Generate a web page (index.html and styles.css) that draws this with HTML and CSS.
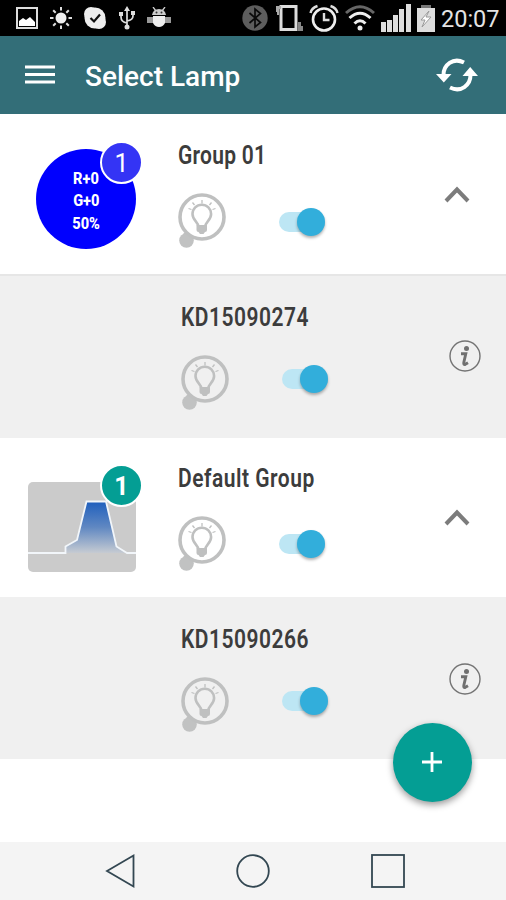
FILE: index.html
```html
<!DOCTYPE html>
<html lang="en">
<head>
    <meta charset="UTF-8">
    <meta name="viewport" content="width=device-width, initial-scale=1.0">
    <title>Select Lamp</title>
    <link rel="stylesheet" href="styles.css">
</head>
<body>
    <!-- shared icons -->
    <svg class="defs" width="0" height="0">
        <symbol id="finder" viewBox="0 0 50 58">
            <path d="M11 43l-3 6" stroke="#c1c2c2" stroke-width="11"/>
            <circle cx="8.500" cy="48.500" r="7.300" fill="#c1c2c2"/>
            <circle cx="24" cy="25" r="22" fill="none" stroke="#bfc0c0" stroke-width="3.600"/>
            <path d="M20.200 34c0-5-6-6.500-6-13a9.300 9.300 0 0 1 18.600 0c0 6.500-6 8-6 13" transform="translate(.3 1)" fill="none" stroke="#bfc0c0" stroke-width="2.600"/>
            <path d="M18.500 33h10.500v5q0 2-2 2l-1.500 2h-3.500l-1.500-2q-2 0-2-2z" fill="#bfc0c0"/>
            <path d="M24 8v3.500M14.500 10.500l2 2.500M33.500 10.500l-2 2.500M10.500 16.500l3 1M37.500 16.500l-3 1" stroke="#bfc0c0" stroke-width="1.300"/>
        </symbol>
        <symbol id="chevron" viewBox="0 0 26 18">
            <path d="M2 16L13 4.500 24 16" fill="none" stroke="#7c7c7c" stroke-width="4"/>
        </symbol>
        <symbol id="info" viewBox="0 0 32 32">
            <circle cx="16" cy="16" r="15" fill="none" stroke="#737373" stroke-width="1.400"/>
            <circle cx="17.500" cy="8.500" r="2.500" fill="#707070"/>
            <path d="M12 13.800h4.800L14.800 22.500q-.4 2.500 1.600 1.800l2.600-1.500" fill="none" stroke="#707070" stroke-width="2.900"/>
        </symbol>
    </svg>

    <div class="status-bar">
        <div class="status-left">
            <svg width="22" height="22" viewBox="0 0 22 22">
                <rect x="1" y="1" width="20" height="20" fill="none" stroke="#ddd" stroke-width="2"/>
                <path d="M3 19v-5l4-3 3 2 4-3 5 5v4z" fill="#fff"/>
            </svg>
            <svg width="22" height="22" viewBox="0 0 22 22">
                <circle cx="11" cy="11" r="5.500" fill="#eee"/>
                <path d="M11 0v3.500M11 18.500V22M0 11h3.500M18.500 11H22M3.200 3.200l2.500 2.500M16.300 16.300l2.500 2.500M3.200 18.800l2.500-2.500M16.300 5.700l2.500-2.500" stroke="#ddd" stroke-width="2"/>
            </svg>
            <svg width="24" height="24" viewBox="0 0 24 24">
                <circle cx="8" cy="8" r="7" fill="#eee"/>
                <circle cx="16" cy="16" r="7" fill="#eee"/>
                <circle cx="12" cy="12" r="10.500" fill="#eee"/>
                <path d="M7.500 12l3.500 3.500 6-7" fill="none" stroke="#111" stroke-width="2.200"/>
            </svg>
            <svg width="16" height="24" viewBox="0 0 16 24">
                <path d="M8 3v18M8 17q-6-1-6-6V8M8 15q6-1 6-5V7" fill="none" stroke="#ddd" stroke-width="1.700"/>
                <path d="M8 0l3 5H5zM0 6h4v4H0zM12 5h4v4h-4z" fill="#ddd"/>
                <circle cx="8" cy="21" r="2.500" fill="#ddd"/>
            </svg>
            <svg width="24" height="22" viewBox="0 0 24 22">
                <path d="M5 8Q6 2 12 2t7 6z" fill="#ccc"/>
                <path d="M6 0l3 4M18 0l-3 4" stroke="#ccc" stroke-width="1.300"/>
                <path d="M0 10h6v6H0zM18 10h6v6h-6z" fill="#999"/>
                <path d="M6 9h12v7q-2 4-6 4t-6-4z" fill="#eee"/>
                <circle cx="9.500" cy="5.500" r="1" fill="#333"/>
                <circle cx="14.500" cy="5.500" r="1" fill="#333"/>
            </svg>
        </div>
        <div class="status-right">
            <svg width="26" height="26" viewBox="0 0 26 26">
                <circle cx="13" cy="13" r="12.700" fill="#5d5d5d"/>
                <path d="M7.500 8l11 9.500-5.500 4.500V4l5.500 4.500L7.500 18" fill="none" stroke="#0a0a0a" stroke-width="1.700"/>
            </svg>
            <svg width="30" height="28" viewBox="0 0 30 28">
                <rect x="8" y="2.500" width="15" height="23" fill="none" stroke="#ddd" stroke-width="3"/>
                <path d="M3 2h5v3H6v6H4V8H3z" fill="#aaa"/>
                <path d="M25 18h3v4h2v5h-5z" fill="#888"/>
            </svg>
            <svg width="30" height="28" viewBox="0 0 30 28">
                <circle cx="15" cy="15.500" r="11" fill="none" stroke="#eee" stroke-width="2.600"/>
                <path d="M15 9v7h5.500M1.500 9q1-5 7-7M28.500 9q-1-5-7-7" fill="none" stroke="#ddd" stroke-width="2.400"/>
            </svg>
            <svg width="30" height="26" viewBox="0 0 30 26">
                <path d="M1 8Q15-4.500 29 8" fill="none" stroke="#666" stroke-width="3"/>
                <path d="M4.500 13Q15 3.500 25.500 13M9.500 18.500Q15 13 20.500 18.500" fill="none" stroke="#eee" stroke-width="3"/>
                <circle cx="15" cy="23" r="2.500" fill="#eee"/>
            </svg>
            <svg width="30" height="28" viewBox="0 0 30 28">
                <path d="M0 18h5v10H0zM6 16h5v12H6zM12 11h5v17h-5zM18 5h5v23h-5zM25 0h5v28h-5z" fill="#ddd"/>
            </svg>
            <svg width="18" height="27" viewBox="0 0 18 27">
                <path d="M4 0h10v3H4z" fill="#777"/>
                <path d="M0 3h18v24H0z" fill="#ddd"/>
                <path d="M12 6l-8 9h4l-3 7 9-10H9z" fill="#fff" stroke="#999" stroke-width="1"/>
            </svg>
            <span class="clock">20:07</span>
        </div>
    </div>

    <header class="app-bar">
        <svg class="menu-icon" width="30" height="20" viewBox="0 0 30 20">
            <path d="M0 2h30M0 9.500h30M0 17h30" stroke="#fff" stroke-width="3.200"/>
        </svg>
        <h1>Select Lamp</h1>
        <svg class="refresh-icon" width="42" height="34" viewBox="0 0 42 34">
            <path d="M28 4.500C17-1 7.500 7 7.500 17M14 29.500C25 35 34.500 27 34.500 17" fill="none" stroke="#fff" stroke-width="4"/>
            <path d="M0 16h15.500L7.800 24.500zM26.500 18H42L34.200 9z" fill="#fff"/>
        </svg>
    </header>

    <main class="lamp-list">
        <section class="row group first">
            <div class="thumb">
                <div class="color-disc">
                    <span>R+0</span>
                    <span>G+0</span>
                    <span>50%</span>
                </div>
                <span class="badge blue">1</span>
            </div>
            <div class="details">
                <h2>Group 01</h2>
                <div class="controls">
                    <svg class="finder"><use href="#finder"/></svg>
                    <span class="switch"></span>
                </div>
            </div>
            <svg class="chevron"><use href="#chevron"/></svg>
        </section>

        <section class="row device">
            <div class="thumb"></div>
            <div class="details">
                <h2>KD15090274</h2>
                <div class="controls">
                    <svg class="finder"><use href="#finder"/></svg>
                    <span class="switch"></span>
                </div>
            </div>
            <svg class="info"><use href="#info"/></svg>
        </section>

        <section class="row group second">
            <div class="thumb">
                <svg class="curve" width="108" height="90" viewBox="0 0 108 90">
                    <defs>
                        <linearGradient id="fill" x1="0" y1="0" x2="0" y2="1">
                            <stop offset="0" stop-color="#1f5fbd"/>
                            <stop offset=".5" stop-color="#6088c2"/>
                            <stop offset="1" stop-color="#c6cbd2"/>
                        </linearGradient>
                    </defs>
                    <rect width="108" height="90" rx="5" fill="#cbcbcb"/>
                    <path d="M37.500 71v-6.500L49 58l9.500-38.500H78L88.500 64.500 99 71z" fill="url(#fill)"/>
                    <path d="M0 71h37.500v-6.500L49 58l9.500-38.500H78L88.500 64.500 99 71h9" fill="none" stroke="#f2f6fa" stroke-width="1.800"/>
                </svg>
                <span class="badge teal">1</span>
            </div>
            <div class="details">
                <h2>Default Group</h2>
                <div class="controls">
                    <svg class="finder"><use href="#finder"/></svg>
                    <span class="switch"></span>
                </div>
            </div>
            <svg class="chevron"><use href="#chevron"/></svg>
        </section>

        <section class="row device last">
            <div class="thumb"></div>
            <div class="details">
                <h2>KD15090266</h2>
                <div class="controls">
                    <svg class="finder"><use href="#finder"/></svg>
                    <span class="switch"></span>
                </div>
            </div>
            <svg class="info"><use href="#info"/></svg>
        </section>
    </main>

    <button class="fab" aria-label="Add">
        <svg width="21" height="21" viewBox="0 0 21 21">
            <path d="M10 0v20M0 10h20" stroke="#fff" stroke-width="2.800"/>
        </svg>
    </button>

    <nav class="nav-bar">
        <svg width="30" height="36" viewBox="0 0 30 36">
            <path d="M2 18L28.500 2.500v31z" fill="none" stroke="#334752" stroke-width="1.800"/>
        </svg>
        <svg width="34" height="34" viewBox="0 0 34 34">
            <circle cx="17" cy="17" r="15.800" fill="none" stroke="#334752" stroke-width="1.800"/>
        </svg>
        <svg width="34" height="34" viewBox="0 0 34 34">
            <rect x="1" y="1" width="32" height="32" fill="none" stroke="#334752" stroke-width="1.800"/>
        </svg>
    </nav>
</body>
</html>
```

FILE: styles.css
```css
/* styles.css */
* {
    box-sizing: border-box;
}

body {
    font-family: Roboto, "Liberation Sans", sans-serif;
    background-color: #fff;
    color: #3c3c3c;
    display: flex;
    flex-direction: column;
    height: 900px;
    margin: 0;
    overflow: hidden;
}

svg {
    display: block;
    flex-shrink: 0;
}

.defs {
    position: absolute;
}

/* status bar */
.status-bar {
    background-color: #000;
    display: flex;
    justify-content: space-between;
    align-items: center;
    height: 36px;
    padding: 0 8px 0 16px;
}

.status-left {
    display: flex;
    align-items: center;
    gap: 12px;
}

.status-left svg:nth-child(3) {
    margin-left: -1px;
}

.status-right {
    display: flex;
    align-items: center;
    gap: 6px;
}

.status-right svg:nth-child(2) {
    margin-left: -1px;
}

.clock {
    color: #e4e4e4;
    font-size: 23.5px;
    line-height: 36px;
    width: 57px;
    white-space: nowrap;
    padding-top: 2px;
}

/* app bar */
.app-bar {
    background-color: #336e78;
    display: flex;
    align-items: center;
    height: 78px;
    padding: 0 28px 0 25px;
}

.app-bar h1 {
    color: #fff;
    font-size: 28px;
    font-weight: 500;
    line-height: 36px;
    margin: 3px 0 0 30px;
}

.refresh-icon {
    margin-left: auto;
}

/* list */
.row {
    display: flex;
    height: 162px;
}

.group.first {
    border-bottom: 2px solid #e6e6e6;
}

.group.second {
    height: 159px;
}

.device {
    background-color: #f0f0f0;
}

.thumb {
    position: relative;
    width: 178px;
    flex-shrink: 0;
}

.device .thumb {
    width: 180.5px;
}

.color-disc {
    background-color: #0000fe;
    border-radius: 50%;
    color: #fff;
    display: flex;
    flex-direction: column;
    align-items: center;
    width: 100px;
    height: 100px;
    margin: 35px 0 0 36px;
    padding-top: 18px;
}

.color-disc span {
    font-size: 17px;
    font-weight: 800;
    line-height: 22.3px;
    transform: scaleX(0.86);
}

.curve {
    margin: 44px 0 0 28px;
}

.badge {
    position: absolute;
    left: 100px;
    top: 27px;
    width: 43px;
    height: 43px;
    border: 2px solid #fff;
    border-radius: 50%;
    color: #fff;
    font-size: 25px;
    line-height: 41px;
    text-align: center;
}

.badge.blue {
    background-color: #3434f5;
}

.badge.teal {
    background-color: #049e94;
    top: 26px;
    font-weight: 700;
}

.details {
    width: 266px;
    padding-top: 27px;
}

.details h2 {
    font-size: 25px;
    font-weight: 600;
    letter-spacing: 0.6px;
    line-height: 30px;
    margin: 0;
    transform: scaleX(0.84);
    transform-origin: left;
    white-space: nowrap;
}

.first .details h2 {
    letter-spacing: 0.3px;
}

.second .details {
    padding-top: 26px;
}

.controls {
    display: flex;
    align-items: flex-start;
    margin-top: 21px;
}

.finder {
    width: 50px;
    height: 58px;
}

/* toggle, always on here */
.switch {
    background-color: #bde6f4;
    border-radius: 10px;
    display: flex;
    align-items: center;
    justify-content: flex-end;
    width: 46px;
    height: 20px;
    margin: 20px 0 0 51px;
}

.second .switch {
    margin-top: 19px;
}

.device .switch {
    margin-top: 15px;
}

.switch::after {
    content: "";
    background-color: #32aedb;
    border-radius: 50%;
    box-shadow: 0 2px 3px rgba(0, 0, 0, 0.3);
    width: 28px;
    height: 28px;
    flex-shrink: 0;
}

.chevron {
    width: 26px;
    height: 18px;
    margin-top: 71px;
}

.second .chevron {
    margin-top: 70px;
}

.info {
    width: 32px;
    height: 32px;
    margin-top: 64px;
    margin-left: 2px;
}

/* last row sits slightly lower inside its background */
.last .details {
    padding-top: 28px;
}

.last .info {
    margin-top: 66px;
}

/* floating add button */
.fab {
    position: absolute;
    left: 393px;
    top: 723px;
    width: 79px;
    height: 79px;
    padding: 0;
    border: none;
    border-radius: 50%;
    background-color: #049e94;
    box-shadow: 0 3px 7px rgba(0, 0, 0, 0.4);
    display: flex;
    align-items: center;
    justify-content: center;
    cursor: pointer;
}

/* system navigation */
.nav-bar {
    background-color: #f4f4f4;
    display: flex;
    align-items: center;
    justify-content: space-between;
    height: 58px;
    margin-top: auto;
    padding: 0 101px 0 105px;
}
```
